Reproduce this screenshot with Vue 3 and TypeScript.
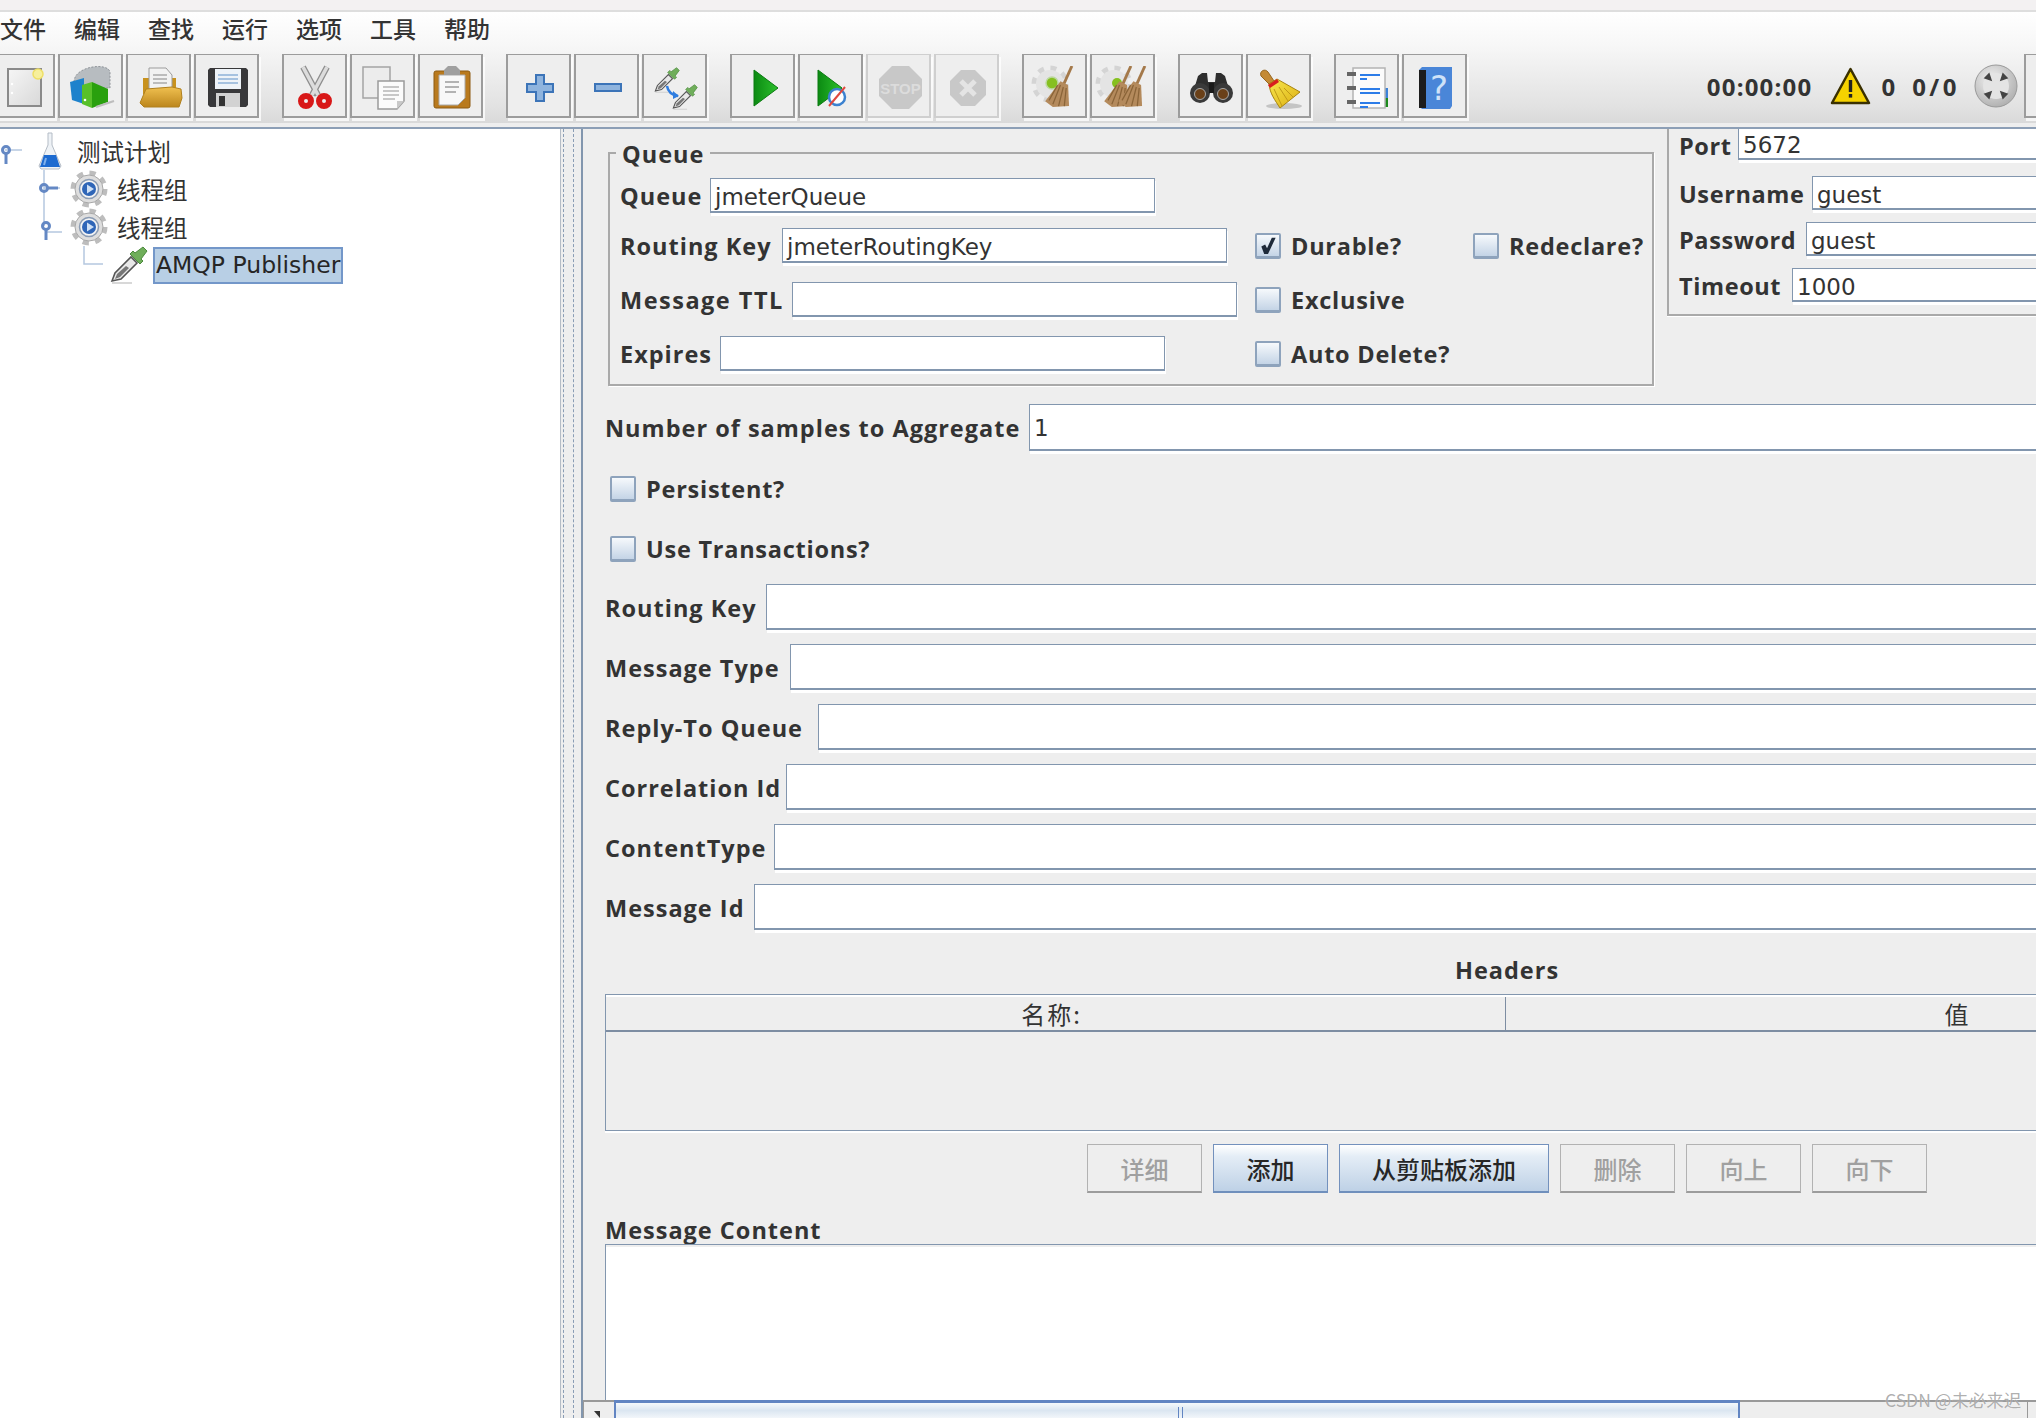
<script setup lang="ts">
interface LabelledField {
  label: string
  value?: string
  labelWidth: number
}

const menus: string[] = ['文件', '编辑', '查找', '运行', '选项', '工具', '帮助']

const serverFields: LabelledField[] = [
  { label: 'Port', value: '5672', labelWidth: 59 },
  { label: 'Username', value: 'guest', labelWidth: 133 },
  { label: 'Password', value: 'guest', labelWidth: 127 },
  { label: 'Timeout', value: '1000', labelWidth: 113 },
]

const propFields: LabelledField[] = [
  { label: 'Routing Key', labelWidth: 161 },
  { label: 'Message Type', labelWidth: 185 },
  { label: 'Reply-To Queue', labelWidth: 213 },
  { label: 'Correlation Id', labelWidth: 181 },
  { label: 'ContentType', labelWidth: 169 },
  { label: 'Message Id', labelWidth: 149 },
]

const tableButtons = [
  { text: '详细', on: false },
  { text: '添加', on: true },
  { text: '从剪贴板添加', on: true, wide: true },
  { text: '删除', on: false },
  { text: '向上', on: false },
  { text: '向下', on: false },
]
</script>

<template>
  <div class="app">
    <svg class="defs" width="0" height="0">
      <defs>
        <linearGradient id="pageG" x1="0" y1="0" x2="1" y2="1"><stop offset="0" stop-color="#f6f6f6" /><stop offset="1" stop-color="#d8d8d8" /></linearGradient>
        <linearGradient id="folderG" x1="0" y1="0" x2="0" y2="1"><stop offset="0" stop-color="#f0c050" /><stop offset="1" stop-color="#bc861c" /></linearGradient>
        <linearGradient id="greenG" x1="0" y1="0" x2="1" y2="0"><stop offset="0" stop-color="#0b8a12" /><stop offset="1" stop-color="#2cc02c" /></linearGradient>
        <linearGradient id="broomG" x1="0" y1="0" x2="1" y2="1"><stop offset="0" stop-color="#f8e850" /><stop offset="1" stop-color="#dcae10" /></linearGradient>
        <radialGradient id="dialG" cx=".4" cy=".35" r=".8"><stop offset="0" stop-color="#f2f2f2" /><stop offset="1" stop-color="#a4a4a4" /></radialGradient>
        <symbol id="gear" viewBox="0 0 38 38">
          <circle cx="19" cy="19" r="15.5" fill="none" stroke="#bdbdbd" stroke-width="6" stroke-dasharray="6 6.17" />
          <circle cx="19" cy="19" r="14" fill="#dedede" stroke="#a8a8a8" />
          <circle cx="19" cy="19" r="9.5" fill="#f4f4f4" stroke="#8b9cb4" stroke-width="1.5" />
          <circle cx="19" cy="19" r="7" fill="#2f66b8" />
          <path d="M17 14.5 24 19 17 23.5Z" fill="#cfe0f5" />
        </symbol>
        <symbol id="dropper" viewBox="0 0 38 38">
          <path d="M2 37h20" stroke="#d8d8d8" stroke-width="2" />
          <path d="M2 35 5 27 21 11 27 17 11 33Z" fill="#e8e8e8" stroke="#555" stroke-width="1.6" />
          <path d="M5 33 7 28 16 20 19 22 10 31Z" fill="#777" />
          <path d="M20 8 30 18 33 15 31 13 37 5 33 1 25 7 23 5Z" fill="#6fae5a" stroke="#4c8a3e" />
        </symbol>
        <symbol id="brownBroom" viewBox="0 0 30 44">
          <path d="M28 0 19 20" stroke="#a4794a" stroke-width="3" />
          <path d="M16 16 24 20 25 42 8 43 0 37Z" fill="#b48a5c" />
          <path d="M16 20 8 40M19 22 14 42M22 23 20 42M13 20 4 36" stroke="#8a6438" stroke-width="1.3" />
        </symbol>
      </defs>
    </svg>

    <div class="top-strip"></div>

    <div class="chrome">
      <nav class="menu">
        <span v-for="m in menus" :key="m">{{ m }}</span>
      </nav>

      <div class="toolbar">
        <div class="tb-group">
          <button class="tb">
            <svg viewBox="0 0 65 64"><rect x="18" y="15" width="33" height="37" fill="url(#pageG)" stroke="#8a8a8a" stroke-width="2" /><circle cx="48" cy="20" r="5" fill="#f6ef9c" stroke="#eedf66" stroke-width="1.5" /><circle cx="22" cy="30" r="1.2" fill="#fff" /><circle cx="22" cy="39" r="1.2" fill="#fff" /></svg>
          </button>
          <button class="tb">
            <svg viewBox="0 0 65 64"><path d="M16 28C16 12 50 8 52 18V34H16Z" fill="#b7bcc0" stroke="#8f9499" stroke-dasharray="2 1.5" /><path d="M12 28 26 24V50L14 46Z" fill="#1e82cc" /><path d="M24 31 34 28V54L24 50Z" fill="#58c02a" /><path d="M34 28 50 35V48L34 54Z" fill="#29a00e" /><circle cx="27" cy="46" r="1.3" fill="#fff" /><path d="M38 53 56 47" stroke="#bdbdbd" stroke-width="2" /></svg>
          </button>
          <button class="tb">
            <svg viewBox="0 0 65 64"><path d="M17 24H50V40H17Z" fill="#c8921e" /><path d="M23 14H40L46 21V40H23Z" fill="#f2f2f2" stroke="#9c9c9c" /><path d="M27 21H41M27 25H41M27 29H41" stroke="#aaa" stroke-width="1.5" /><path d="M20 35 46 33 55 35 56 44 53 53H18L14 49Z" fill="url(#folderG)" stroke="#b0801e" /></svg>
          </button>
          <button class="tb">
            <svg viewBox="0 0 65 64"><path d="M14 16 16 14H52L54 16V51L52 53H16L14 51Z" fill="#38383a" /><rect x="21" y="15" width="26" height="20" fill="#eef3f8" /><path d="M24 21H44M24 25H44M24 29H44" stroke="#8fb2d8" stroke-width="1.5" /><rect x="22" y="39" width="24" height="14" fill="#d2d2d2" /><rect x="25" y="42" width="6" height="10" fill="#333" /></svg>
          </button>
        </div>

        <div class="tb-group">
          <button class="tb">
            <svg viewBox="0 0 65 64"><path d="M21 13 36 41M45 13 30 41" stroke="#8e8e8e" stroke-width="6" fill="none" /><path d="M21 13 36 41M45 13 30 41" stroke="#dcdcdc" stroke-width="3.6" fill="none" /><circle cx="24" cy="47" r="5" fill="none" stroke="#d81818" stroke-width="6" /><circle cx="42" cy="47" r="5" fill="none" stroke="#d81818" stroke-width="6" /></svg>
          </button>
          <button class="tb">
            <svg viewBox="0 0 65 64"><path d="M13 13H40V44H13Z" fill="#ececec" stroke="#a4a4a4" stroke-width="1.5" /><path d="M28 27H54V47L47 55H28Z" fill="#fbfbfb" stroke="#9b9b9b" stroke-width="1.5" /><path d="M33 33H49M33 37H49M33 41H49M33 45H45" stroke="#b6b6b6" stroke-width="1.5" /><path d="M47 55V47H54Z" fill="#c9c9c9" /></svg>
          </button>
          <button class="tb">
            <svg viewBox="0 0 65 64"><rect x="16" y="17" width="36" height="37" rx="2" fill="#b97a1e" stroke="#8d5b12" /><path d="M21 21H47V44L40 51H21Z" fill="#f8f8f8" stroke="#aaa" /><path d="M26 16 30 12H38L42 16V21H26Z" fill="#9f9f9f" /><path d="M27 28H41M27 33H41M27 38H38" stroke="#9c9c9c" stroke-width="1.6" /></svg>
          </button>
        </div>

        <div class="tb-group">
          <button class="tb">
            <svg viewBox="0 0 65 64"><path d="M30 21H38V30H47V38H38V47H30V38H21V30H30Z" fill="#8fb4de" stroke="#3c74b8" stroke-width="2" /></svg>
          </button>
          <button class="tb">
            <svg viewBox="0 0 65 64"><rect x="21" y="30" width="26" height="7" fill="#8fb4de" stroke="#3c74b8" stroke-width="2" /></svg>
          </button>
          <button class="tb">
            <svg viewBox="0 0 65 64"><use href="#dropper" x="12" y="13" width="26" height="26" /><use href="#dropper" x="30" y="30" width="26" height="26" /><path d="M25 32c1 6 5 9 11 10" fill="none" stroke="#2f7de0" stroke-width="2.5" /><path d="M31 37 37 42 31 45Z" fill="#2f7de0" /></svg>
          </button>
        </div>

        <div class="tb-group">
          <button class="tb">
            <svg viewBox="0 0 65 64"><path d="M24 16 48 34 24 52Z" fill="url(#greenG)" stroke="#0b7a10" /></svg>
          </button>
          <button class="tb">
            <svg viewBox="0 0 65 64"><path d="M20 16 44 34 20 52Z" fill="url(#greenG)" stroke="#0b7a10" /><circle cx="39" cy="43" r="8" fill="#fff" stroke="#3c82d0" stroke-width="2.5" /><path d="M31 52 47 33" stroke="#e0483e" stroke-width="2" /></svg>
          </button>
          <button class="tb off">
            <svg viewBox="0 0 65 64"><path d="M26 12H43L56 25V42L43 55H26L13 42V25Z" fill="#c8c8c8" /><text x="34.5" y="40" text-anchor="middle" class="stop-text">STOP</text></svg>
          </button>
          <button class="tb off">
            <svg viewBox="0 0 65 64"><path d="M27 16H41L52 27V41L41 52H27L16 41V27Z" fill="#c8c8c8" /><path d="M27 27 41 41M41 27 27 41" stroke="#e4e4e4" stroke-width="5" /></svg>
          </button>
        </div>

        <div class="tb-group">
          <button class="tb">
            <svg viewBox="0 0 65 64"><circle cx="28" cy="30" r="16" fill="none" stroke="#d4d4d4" stroke-width="5" stroke-dasharray="6 6.56" /><circle cx="28" cy="30" r="14" fill="#e4e4e4" /><circle cx="30" cy="29" r="6" fill="#86c020" stroke="#bcd8a0" stroke-width="1.5" /><use href="#brownBroom" x="22" y="12" width="31" height="42" /></svg>
          </button>
          <button class="tb">
            <svg viewBox="0 0 65 64"><circle cx="24" cy="30" r="16" fill="none" stroke="#d4d4d4" stroke-width="5" stroke-dasharray="6 6.56" /><circle cx="24" cy="30" r="14" fill="#e4e4e4" /><circle cx="27" cy="29" r="5" fill="#86c020" /><use href="#brownBroom" x="13" y="12" width="31" height="42" /><use href="#brownBroom" x="27" y="12" width="31" height="42" /></svg>
          </button>
        </div>

        <div class="tb-group">
          <button class="tb">
            <svg viewBox="0 0 65 64"><path d="M20 22 24 19H29L30 28H37L38 19H43L47 22 50 32 34 36 17 32Z" fill="#2e2e2e" /><circle cx="22" cy="39" r="10" fill="#3a3a3a" /><circle cx="45" cy="39" r="10" fill="#3a3a3a" /><circle cx="22" cy="40" r="5.5" fill="#6a4018" stroke="#a8a8a8" /><circle cx="45" cy="40" r="5.5" fill="#6a4018" stroke="#a8a8a8" /><rect x="31" y="29" width="5" height="10" fill="#1a1a1a" /></svg>
          </button>
          <button class="tb">
            <svg viewBox="0 0 65 64"><ellipse cx="38" cy="52" rx="18" ry="3" fill="#c4c4c4" /><path d="M15 22c-2-5 4-8 7-4l6 9-5 3Z" fill="#c48a34" stroke="#96661e" /><path d="M23 30 31 25 54 38 34 54C29 46 24 40 23 30Z" fill="url(#broomG)" stroke="#a88410" /><path d="M22 31 31 25 33 28 24 34Z" fill="#d81e1e" /><path d="M28 35 36 52M33 33 42 47M38 34 47 43" stroke="#c09a18" /></svg>
          </button>
        </div>

        <div class="tb-group">
          <button class="tb">
            <svg viewBox="0 0 65 64"><rect x="49" y="34" width="5" height="10" fill="#3c82d8" /><rect x="49" y="44" width="5" height="9" fill="#1c8a1c" /><rect x="19" y="14" width="32" height="40" fill="#fbfbfb" stroke="#b4b4b4" stroke-width="1.5" /><path d="M13 20H22M13 34H22M13 48H22" stroke="#666" stroke-width="4" /><path d="M26 21H46M26 25H33M26 35H46M26 39H46M26 49H46M26 53H34" stroke="#2c7ce8" stroke-width="2" /></svg>
          </button>
          <button class="tb">
            <svg viewBox="0 0 65 64"><path d="M17 16 20 13H50V52L48 55H20L17 52Z" fill="#4a86d8" /><rect x="17" y="16" width="7" height="38" fill="#1c1c1c" /><text x="37" y="46" text-anchor="middle" class="help-text">?</text></svg>
          </button>
        </div>

        <div class="status">
          <span class="st-time">00:00:00</span>
          <svg class="st-warn" viewBox="0 0 41 38"><path d="M20.5 2 39 36H2Z" fill="#f6d200" stroke="#3a3000" stroke-width="2.5" stroke-linejoin="round" /><rect x="18.8" y="13" width="3.4" height="12" fill="#222" /><rect x="18.8" y="27" width="3.4" height="3.6" fill="#222" /></svg>
          <span class="st-count">0</span>
          <span class="st-ratio">0/0</span>
          <svg class="st-dial" viewBox="0 0 44 44"><circle cx="22" cy="22" r="21" fill="url(#dialG)" stroke="#9a9a9a" /><circle cx="22" cy="22" r="13" fill="#e4e4e4" /><path d="M11 14 15 10 17 16ZM33 14 29 10 27 16ZM11 30 15 34 17 28ZM33 30 29 34 27 28Z" fill="#444" stroke="#444" stroke-width="1.5" /></svg>
          <button class="tb"></button>
        </div>
      </div>
    </div>

    <div class="chrome-foot"></div>

    <main class="main">
      <aside class="tree">
        <svg class="tree-lines" width="120" height="160" viewBox="0 0 120 160">
          <path d="M44 38V94M46 100H62M84 114V132H103M5 18H22M44 56H60" fill="none" stroke="#b5c8e0" stroke-width="1.5" />
          <g fill="none" stroke="#6488c4" stroke-width="3">
            <circle cx="6" cy="18" r="3.5" /><path d="M6 22V32" />
            <circle cx="44" cy="56" r="3.5" /><path d="M48 56H58" />
            <circle cx="46" cy="94" r="3.5" /><path d="M46 98V108" />
          </g>
        </svg>
        <div class="node first">
          <svg class="flask" viewBox="0 0 26 38"><path d="M11 1 15 1V13L24 34 22 37H4L2 34 11 13Z" fill="#eef2f6" stroke="#b4bcc6" /><path d="M7 23H19L23 35H3Z" fill="#1c6ad0" /><path d="M9 26 7 33" stroke="#7fb0ec" stroke-width="2" /></svg>
          <span>测试计划</span>
        </div>
        <div class="node second">
          <svg class="gear" viewBox="0 0 38 38"><use href="#gear" /></svg>
          <span>线程组</span>
        </div>
        <div class="node second">
          <svg class="gear" viewBox="0 0 38 38"><use href="#gear" /></svg>
          <span>线程组</span>
        </div>
        <div class="node third">
          <svg class="gear" viewBox="0 0 38 38"><use href="#dropper" /></svg>
          <span class="picked">AMQP Publisher</span>
        </div>
      </aside>

      <div class="splitter"></div>

      <section class="panel">
        <div class="panel-body">
          <div class="panel-inner">
            <div class="top-row">
              <div class="queue-box">
                <span class="legend">Queue</span>
                <div class="q-row">
                  <label class="lbl q-lbl">Queue</label>
                  <div class="field q-field">jmeterQueue</div>
                </div>
                <div class="q-row gap-a">
                  <div class="q-left">
                    <label class="lbl rk-lbl">Routing Key</label>
                    <div class="field q-field">jmeterRoutingKey</div>
                  </div>
                  <div class="check d-cell"><i class="box"><svg viewBox="0 0 22 22"><path d="M4 12 8 10 10 14 15 3 19 3 11 20 7 20Z" fill="#1e2a3a" /></svg></i><span class="lbl">Durable?</span></div>
                  <div class="check"><i class="box"></i><span class="lbl">Redeclare?</span></div>
                </div>
                <div class="q-row gap-b">
                  <div class="q-left">
                    <label class="lbl ttl-lbl wide-label">Message TTL</label>
                    <div class="field q-field"></div>
                  </div>
                  <div class="check"><i class="box"></i><span class="lbl">Exclusive</span></div>
                </div>
                <div class="q-row gap-b">
                  <div class="q-left">
                    <label class="lbl exp-lbl">Expires</label>
                    <div class="field q-field"></div>
                  </div>
                  <div class="check"><i class="box"></i><span class="lbl">Auto Delete?</span></div>
                </div>
              </div>

              <div class="server-box">
                <div v-for="f in serverFields" :key="f.label" class="srv-row">
                  <label class="lbl" :style="{ width: f.labelWidth + 'px' }">{{ f.label }}</label>
                  <div class="field grow">{{ f.value }}</div>
                </div>
              </div>
            </div>

            <div class="row samples">
              <label class="lbl samples-lbl">Number of samples to Aggregate</label>
              <div class="field grow">1</div>
            </div>

            <div class="check solo persistent"><i class="box"></i><span class="lbl">Persistent?</span></div>
            <div class="check solo trans"><i class="box"></i><span class="lbl">Use Transactions?</span></div>

            <div v-for="f in propFields" :key="f.label" class="row prop">
              <label class="lbl" :style="{ width: f.labelWidth + 'px' }">{{ f.label }}</label>
              <div class="field grow"></div>
            </div>

            <div class="lbl headers-title">Headers</div>
            <div class="table">
              <div class="thead">
                <div class="th name">名称:</div>
                <div class="th">值</div>
              </div>
              <div class="tbody"></div>
            </div>

            <div class="actions">
              <button v-for="b in tableButtons" :key="b.text" class="act" :class="{ on: b.on, wide: b.wide }">{{ b.text }}</button>
            </div>

            <div class="lbl content-title">Message Content</div>
            <div class="content-area"></div>
          </div>
        </div>

        <div class="hscroll">
          <div class="arrow"><i></i></div>
          <div class="thumb"><i></i></div>
          <div class="track"></div>
        </div>
      </section>
    </main>

    <span class="watermark">CSDN @未必来迟</span>
  </div>
</template>

<style>
html, body {
  margin: 0;
  background: #eeeeee;
}
</style>

<style scoped>
.app {
  position: relative;
  width: 2036px;
  height: 1418px;
  overflow: hidden;
  display: flex;
  flex-direction: column;
  background: #eeeeee;
  color: #333333;
  font-family: "DejaVu Sans", "Noto Sans CJK SC", sans-serif;
  font-size: 24px;
}

.defs {
  position: absolute;
}

.top-strip {
  height: 10px;
  flex: none;
  background: #f3f1f2;
  border-bottom: 2px solid #dedede;
}

.chrome {
  flex: none;
  height: 111px;
  background: linear-gradient(#ffffff 0%, #f7f7f7 30%, #e2e2e2 85%, #d9d9d9 100%);
}

.chrome-foot {
  flex: none;
  height: 4px;
  background: #eeeeee;
  border-bottom: 2px solid #8d9fb6;
}

.menu {
  height: 40px;
  box-sizing: border-box;
  padding-bottom: 7px;
  display: flex;
  gap: 28px;
  align-items: center;
  font-family: "Noto Sans CJK SC", sans-serif;
  font-size: 23px;
  font-weight: 500;
  line-height: 33px;
  color: #333333;
}

.toolbar {
  display: flex;
  gap: 23px;
  padding-top: 2px;
  margin: 0 -53px 0 -10px;
}

.tb-group {
  display: flex;
  gap: 3px;
}

.tb {
  width: 65px;
  height: 64px;
  flex: none;
  padding: 0;
  box-sizing: border-box;
  position: relative;
  background: #eeeeee;
  border: 2px solid #9c9c9c;
  border-top-width: 1px;
  border-bottom-width: 2px;
  box-shadow: 2px 3px 0 rgba(255, 255, 255, 0.75);
}

.tb svg {
  position: absolute;
  left: -2px;
  top: -1px;
  width: 65px;
  height: 64px;
}

.tb.off {
  border-color: #cfcfcf;
}

.stop-text {
  font-family: "Liberation Sans", sans-serif;
  font-weight: 700;
  font-size: 15px;
  fill: #dcdcdc;
}

.help-text {
  font-family: "DejaVu Sans", sans-serif;
  font-size: 34px;
  fill: #cfe2f8;
}

.status {
  flex: 1;
  display: flex;
  justify-content: flex-end;
  align-items: center;
  font-weight: 700;
  font-family: "Open Sans", sans-serif;
  font-size: 24px;
}

.st-time { margin-right: 18px; letter-spacing: 1.2px; }
.st-warn { width: 41px; height: 38px; margin-right: 10px; }
.st-count { margin-right: 17px; }
.st-ratio { margin-right: 14px; letter-spacing: 3.5px; }
.st-dial { width: 44px; height: 44px; margin-right: 6px; }

.main {
  flex: 1;
  min-height: 0;
  display: flex;
}

.tree {
  position: relative;
  width: 561px;
  flex: none;
  box-sizing: border-box;
  padding-top: 3px;
  background: #ffffff;
  border-right: 1px solid #b4bcc6;
  font-family: "DejaVu Sans", "Noto Sans CJK SC", sans-serif;
}

.tree-lines {
  position: absolute;
  left: 0;
  top: 3px;
}

.node {
  position: relative;
  height: 38px;
  display: flex;
  align-items: center;
  font-size: 23.5px;
}

.node.first { padding-left: 37px; gap: 14px; }
.node.second { padding-left: 70px; gap: 9px; }
.node.third { padding-left: 110px; gap: 5px; }

.flask { width: 26px; height: 38px; }
.gear { width: 38px; height: 38px; }

.picked {
  display: block;
  box-sizing: border-box;
  height: 37px;
  line-height: 33px;
  padding: 0 1px;
  width: 190px;
  background: #b8cfe5;
  border: 2px solid #7397c9;
  white-space: nowrap;
  overflow: hidden;
  color: #262626;
}

.splitter {
  width: 11px;
  flex: none;
  margin-left: 2px;
  margin-right: 7px;
  box-sizing: border-box;
  border-left: 1px dashed #8a9db5;
  border-right: 1px dashed #8a9db5;
}

.panel {
  flex: 1;
  min-width: 0;
  display: flex;
  flex-direction: column;
  border-left: 2px solid #8296ae;
}

.panel-body {
  flex: 1;
  min-height: 0;
  overflow: hidden;
}

.panel-inner {
  width: 1826px;
  height: 100%;
  box-sizing: border-box;
  padding-left: 22px;
  display: flex;
  flex-direction: column;
}

.lbl {
  font-family: "Open Sans", "Noto Sans CJK SC", sans-serif;
  font-weight: 700;
  font-size: 23.5px;
  letter-spacing: 1px;
  color: #333333;
  white-space: nowrap;
  flex: none;
}

.check .lbl { letter-spacing: 0.75px; }
.wide-label { letter-spacing: 1.5px; }
.srv-row .lbl { letter-spacing: 0.6px; }

.field {
  box-sizing: border-box;
  background: #ffffff;
  border: 1px solid #8296ae;
  border-bottom-width: 2px;
  box-shadow: 1px 3px 0 #ffffff;
  padding-left: 4px;
  font-size: 23px;
  color: #333333;
  white-space: nowrap;
}

.grow {
  flex: 1;
  min-width: 0;
}

.top-row {
  display: flex;
  align-items: flex-start;
  flex: none;
}

.queue-box {
  position: relative;
  width: 1046px;
  flex: none;
  box-sizing: border-box;
  margin: 23px 0 0 3px;
  padding: 24px 0 13px 10px;
  border: 2px solid #a9a9a9;
  box-shadow: 1px 1px 0 #ffffff;
}

.legend {
  position: absolute;
  left: 6px;
  top: -15px;
  padding: 0 6px 0 6px;
  background: #eeeeee;
  font-family: "Open Sans", sans-serif;
  font-weight: 700;
  font-size: 23.5px;
  letter-spacing: 1px;
  line-height: 30px;
}

.q-row {
  height: 35px;
  display: flex;
  align-items: center;
}

.gap-a { margin-top: 15px; }
.gap-b { margin-top: 19px; }

.q-lbl { width: 90px; }
.rk-lbl { width: 162px; }
.ttl-lbl { width: 172px; }
.exp-lbl { width: 100px; }

.q-left {
  width: 635px;
  flex: none;
  display: flex;
  align-items: center;
}

.q-field {
  width: 445px;
  height: 35px;
  line-height: 37px;
  flex: none;
}

.check {
  display: flex;
  align-items: center;
  gap: 10px;
}

.d-cell { width: 218px; }

.box {
  display: block;
  width: 26px;
  height: 26px;
  flex: none;
  box-sizing: border-box;
  background: linear-gradient(#f6f9fc, #c4d4e6);
  border: 2px solid #8ea3bc;
  border-bottom-width: 3px;
  border-radius: 2px;
}

.box svg {
  display: block;
  width: 22px;
  height: 21px;
}

.server-box {
  flex: 1;
  margin-left: 13px;
  box-sizing: border-box;
  height: 187px;
  padding: 0 0 0 10px;
  border-left: 2px solid #a9a9a9;
  border-bottom: 2px solid #a9a9a9;
  box-shadow: 0 1px 0 #ffffff;
  display: flex;
  flex-direction: column;
}

.srv-row {
  display: flex;
  align-items: center;
  height: 34px;
  margin-top: 12px;
}

.srv-row .lbl {
  padding-top: 2px;
}

.srv-row .field {
  height: 34px;
  line-height: 36px;
}

.srv-row:first-child {
  height: 31px;
  margin-top: 0;
  margin-bottom: 4px;
}

.srv-row:first-child .field {
  height: 31px;
  line-height: 33px;
  border-top: none;
}

.row {
  display: flex;
  align-items: center;
  flex: none;
}

.samples {
  height: 47px;
  margin-top: 18px;
}

.samples .field {
  height: 47px;
  line-height: 47px;
}

.samples-lbl { width: 424px; }

.solo { flex: none; height: 26px; margin-left: 5px; }
.persistent { margin-top: 25px; }
.trans { margin-top: 34px; }
.trans + .prop { margin-top: 22px; }

.prop {
  height: 46px;
  margin-top: 14px;
}

.prop .lbl {
  padding-top: 2px;
}

.prop .field {
  height: 46px;
}

.headers-title {
  flex: none;
  margin-top: 26px;
  line-height: 28px;
  text-align: center;
}

.table {
  flex: none;
  margin-top: 10px;
  height: 137px;
  box-sizing: border-box;
  border-top: 1px solid #8296ae;
  border-left: 1px solid #8296ae;
  border-bottom: 1px solid #8296ae;
  box-shadow: 0 2px 0 #ffffff;
}

.thead {
  height: 37px;
  box-sizing: border-box;
  display: flex;
  border-top: 2px solid #ffffff;
  border-bottom: 2px solid #7d8da2;
}

.th {
  flex: 1;
  text-align: center;
  font-family: "Noto Sans CJK SC", sans-serif;
  font-size: 24px;
  letter-spacing: 2px;
  line-height: 33px;
  color: #333333;
}

.th.name {
  flex: none;
  width: 900px;
  box-sizing: border-box;
  padding-right: 8px;
  border-right: 1px solid #7d8da2;
}

.actions {
  flex: none;
  display: flex;
  justify-content: center;
  gap: 11px;
  margin-top: 13px;
}

.act {
  width: 115px;
  height: 49px;
  padding: 0;
  box-sizing: border-box;
  background: #eeeeee;
  border: 1px solid #b2b2b2;
  border-bottom: 2px solid #9c9c9c;
  font-family: "Noto Sans CJK SC", sans-serif;
  font-size: 24px;
  font-weight: 500;
  color: #a0a0a0;
}

.act.wide { width: 210px; }

.act.on {
  background: linear-gradient(#ffffff, #e4edf6 25%, #bed1e6);
  border-color: #7391bd;
  border-bottom-color: #6f8fbc;
  color: #262626;
}

.content-title {
  flex: none;
  margin-top: 23px;
  line-height: 28px;
}

.content-area {
  flex: 1;
  background: #ffffff;
  border-top: 1px solid #8296ae;
  border-left: 1px solid #8296ae;
  box-shadow: inset 0 2px 0 #eeeeee;
}

.hscroll {
  flex: none;
  height: 18px;
  display: flex;
  background: #eeeeee;
}

.arrow {
  width: 31px;
  flex: none;
  box-sizing: border-box;
  border-top: 2px solid #999999;
  border-left: 1px solid #999999;
  position: relative;
}

.arrow i {
  position: absolute;
  left: 10px;
  bottom: 0;
  border-style: solid;
  border-width: 0 6px 7px 0;
  border-color: transparent #333333 transparent transparent;
}

.thumb {
  position: relative;
  width: 1126px;
  flex: none;
  box-sizing: border-box;
  background: linear-gradient(#f6f9fc, #dbe6f1 50%, #f2f6fa);
  border-top: 3px solid #6285c2;
  border-left: 2px solid #6285c2;
  border-right: 2px solid #6285c2;
}

.thumb i {
  position: absolute;
  left: 562px;
  top: 4px;
  bottom: 0;
  width: 3px;
  border-left: 1px solid #6285c2;
  border-right: 1px solid #6285c2;
}

.track {
  flex: 1;
  border-top: 2px solid #999999;
}

.track::after {
  content: "";
  position: absolute;
  left: 2027px;
  top: 1402px;
  height: 16px;
  border-left: 1px solid #999999;
}

.watermark {
  position: absolute;
  left: 1885px;
  top: 1390px;
  font-family: "Noto Sans CJK SC", sans-serif;
  font-size: 17.5px;
  line-height: 20px;
  color: rgba(130, 130, 130, 0.65);
  text-shadow: 0 0 1px rgba(255, 255, 255, 0.8);
  white-space: nowrap;
}
</style>
